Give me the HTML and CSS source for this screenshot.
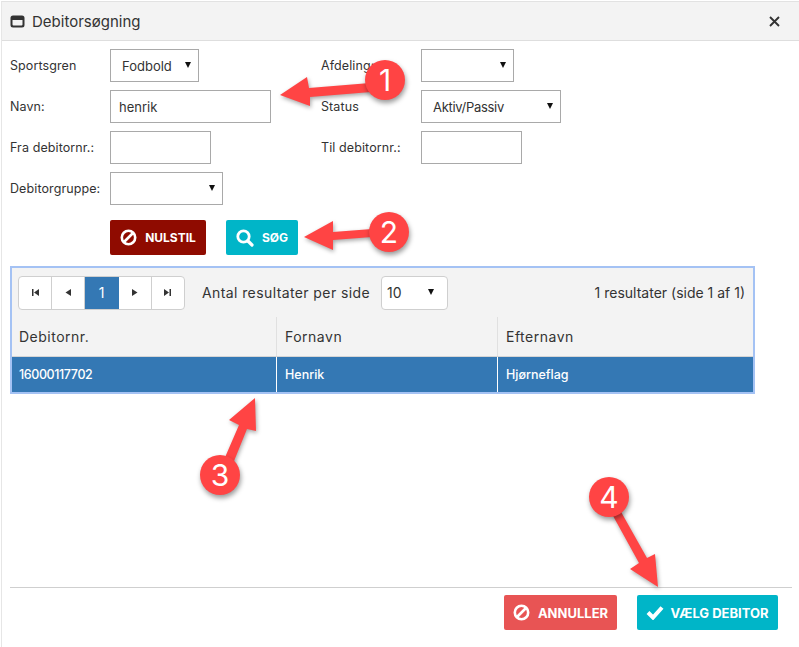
FILE: index.html
```html
<!DOCTYPE html>
<html lang="da">
<head>
<meta charset="utf-8">
<title>Debitorsøgning</title>
<link rel="stylesheet" href="styles.css">
</head>
<body>
<div class="window">
  <header class="titlebar">
    <svg class="win-icon" width="15" height="13" viewBox="0 0 15 13"><path fill="#333" fill-rule="evenodd" d="M3 .5h9A2.500 2.500 0 0 1 14.500 3v7a2.500 2.500 0 0 1-2.500 2.500H3A2.500 2.500 0 0 1 .5 10V3A2.500 2.500 0 0 1 3 .5zM2.500 5v4.500a1 1 0 0 0 1 1h8a1 1 0 0 0 1-1V5z"/></svg>
    <span class="title">Debitorsøgning</span>
    <svg class="close" width="11" height="11" viewBox="0 0 11 11"><path stroke="#333" stroke-width="1.900" d="M1 1l9 9M10 1l-9 9"/></svg>
  </header>
  <main class="content">
    <form class="filters">
      <label class="lbl">Sportsgren</label>
      <div class="select w89"><span class="sel-text">Fodbold</span></div>
      <label class="lbl">Afdeling:</label>
      <div class="select w93"></div>

      <label class="lbl">Navn:</label>
      <div class="input w161">henrik</div>
      <label class="lbl">Status</label>
      <div class="select w140"><span class="sel-text tight">Aktiv/Passiv</span></div>

      <label class="lbl">Fra debitornr.:</label>
      <div class="input w101"></div>
      <label class="lbl">Til debitornr.:</label>
      <div class="input w101"></div>

      <label class="lbl">Debitorgruppe:</label>
      <div class="select w113"></div>
    </form>
    <div class="actions">
      <button class="btn dark-red" type="button">
        <svg class="ico" width="17" height="17" viewBox="0 0 17 17"><circle cx="8.500" cy="8.500" r="6.700" fill="none" stroke="#fff" stroke-width="2.600"/><path stroke="#fff" stroke-width="2.600" d="M4 13L13 4"/></svg>
        NULSTIL
      </button>
      <button class="btn teal small" type="button">
        <svg class="ico" width="18" height="18" viewBox="0 0 18 18"><circle cx="7.500" cy="7.500" r="5.700" fill="none" stroke="#fff" stroke-width="2.800"/><path stroke="#fff" stroke-width="3.200" stroke-linecap="round" d="M12 12l4 4"/></svg>
        SØG
      </button>
    </div>
    <section class="grid">
      <div class="toolbar">
        <div class="pager">
          <span class="page"><svg width="9" height="9" viewBox="0 0 9 9"><path fill="#333" d="M1 1h1.500v7H1zM8 1v7L3 4.500z"/></svg></span>
          <span class="page"><svg width="9" height="9" viewBox="0 0 9 9"><path fill="#333" d="M7 1v7L1.500 4.500z"/></svg></span>
          <span class="page current">1</span>
          <span class="page"><svg width="9" height="9" viewBox="0 0 9 9"><path fill="#333" d="M2 1v7l5.500-3.500z"/></svg></span>
          <span class="page"><svg width="9" height="9" viewBox="0 0 9 9"><path fill="#333" d="M1 1v7l5-3.500zM6.500 1H8v7H6.500z"/></svg></span>
        </div>
        <span class="per-page">Antal resultater per side</span>
        <div class="select size"><span class="sel-text">10</span></div>
        <span class="count">1 resultater (side 1 af 1)</span>
      </div>
      <div class="row head">
        <div class="cell c1">Debitornr.</div>
        <div class="cell c2">Fornavn</div>
        <div class="cell c3">Efternavn</div>
      </div>
      <div class="row selected">
        <div class="cell c1 digits">16000117702</div>
        <div class="cell c2">Henrik</div>
        <div class="cell c3">Hjørneflag</div>
      </div>
    </section>
    <footer class="footer">
      <button class="btn soft-red big-text" type="button">
        <svg class="ico" width="17" height="17" viewBox="0 0 17 17"><circle cx="8.500" cy="8.500" r="6.700" fill="none" stroke="#fff" stroke-width="2.600"/><path stroke="#fff" stroke-width="2.600" d="M4 13L13 4"/></svg>
        ANNULLER
      </button>
      <button class="btn teal wide big-text" type="button">
        <svg class="ico" width="18" height="15" viewBox="0 0 18 15"><path fill="none" stroke="#fff" stroke-width="4" d="M2 7.500l5 5 9-10"/></svg>
        VÆLG DEBITOR
      </button>
    </footer>
  </main>
</div>

<svg class="arrows" width="799" height="647" viewBox="0 0 799 647">
  <g fill="#ff4444">
    <path d="M280 95L307 77L309 88L370 83L371 92L310 97L310 106z"/>
    <path d="M304 237L333 221L333 232L372 229L372 237L333 240L333 250z"/>
    <path d="M255 398L229 420L239 425L223 462L232 466L247 429L256 431z"/>
    <path d="M658 587L630 569L639 563L612 514L620 510L647 558L655 554z"/>
  </g>
</svg>
<span class="badge b1">1</span>
<span class="badge b2">2</span>
<span class="badge b3">3</span>
<span class="badge b4">4</span>
</body>
</html>
```
FILE: styles.css
```css
* { box-sizing: border-box; }
html, body { margin: 0; padding: 0; }
body {
  width: 799px;
  height: 647px;
  overflow: hidden;
  position: relative;
  background: #fff;
  color: #333;
  font-family: Inter, "Open Sans", sans-serif;
  font-size: 13px;
}
.window {
  height: 647px;
  margin-left: 1px;
  margin-top: 1px;
  border-top: 1px solid #e2e2e2;
  border-left: 1px solid #e6e6e6;
  display: flex;
  flex-direction: column;
}
.titlebar {
  height: 39px;
  flex: none;
  display: flex;
  align-items: center;
  padding: 0 19px 0 8px;
  background: #f3f3f3;
  border-bottom: 1px solid #dedede;
}
.win-icon { margin-right: 7px; }
.title { font-size: 15px; flex: 1; }
.close { margin-top: 1px; }
.content { flex: 1; padding: 8px 0 0 8px; display: flex; flex-direction: column; }
.filters {
  display: grid;
  grid-template-columns: 100px 211px 100px 1fr;
  grid-auto-rows: 33px;
  row-gap: 8px;
  align-items: center;
  justify-items: start;
}
.lbl { font-size: 12.500px; letter-spacing: .1px; }
.select, .input {
  height: 33px;
  border: 1px solid #a9a9a9;
  background: #fff;
  display: flex;
  align-items: center;
  position: relative;
  font-size: 13px;
}
.input { padding-left: 8px; }
.select::after {
  content: "";
  position: absolute;
  right: 7px;
  top: 12px;
  border-left: 3.500px solid transparent;
  border-right: 3.500px solid transparent;
  border-top: 6px solid #111;
}
.sel-text { padding-left: 11px; }
.tight { letter-spacing: -.3px; }
.w89 { width: 89px; }
.w93 { width: 93px; }
.w113 { width: 113px; }
.w140 { width: 140px; }
.w161 { width: 161px; }
.w101 { width: 101px; }
.actions { display: flex; gap: 20px; margin: 15px 0 0 100px; }
.btn {
  height: 35px;
  border: 0;
  border-radius: 2px;
  color: #fff;
  font-family: inherit;
  font-weight: 700;
  font-size: 12px;
  display: flex;
  align-items: center;
  justify-content: center;
  gap: 8px;
  padding: 0;
}
.big-text { font-size: 13px; }
.dark-red { background: #8f0b00; width: 96px; }
.teal { background: #00b5c8; }
.small { width: 72px; }
.soft-red { background: #e85454; width: 113px; }
.wide { width: 141px; gap: 6px; }
.grid {
  width: 745px;
  height: 128px;
  margin-top: 11px;
  border: 2px solid #a4c2f4;
  display: flex;
  flex-direction: column;
}
.toolbar {
  height: 49px;
  flex: none;
  background: #f3f3f3;
  display: flex;
  align-items: center;
  padding: 0 8px 0 6px;
}
.pager {
  display: flex;
  width: 167px;
  height: 34px;
  border: 1px solid #cfcfcf;
  border-radius: 4px;
  background: #fff;
  overflow: hidden;
}
.page {
  flex: 1;
  display: flex;
  align-items: center;
  justify-content: center;
  border-right: 1px solid #cfcfcf;
}
.page:last-child { border-right: 0; }
.current { background: #3478b4; color: #fff; border-right-color: #3478b4; font-size: 14px; }
.per-page { margin-left: 17px; font-size: 14px; letter-spacing: .4px; }
.size { width: 67px; height: 34px; margin-left: 11px; border: 1px solid #cfcfcf; border-radius: 4px; font-size: 14px; }
.size .sel-text { padding-left: 5px; }
.size::after { right: 13px; }
.count { margin-left: auto; font-size: 14px; }
.row { display: flex; flex: none; }
.head { height: 40px; background: #f3f3f3; font-size: 14px; letter-spacing: .5px; border-bottom: 1px solid #d5d5d5; }
.selected { height: 35px; background: #3478b4; color: #fff; font-weight: 500; font-size: 12.500px; }
.cell { display: flex; align-items: center; padding-left: 8px; border-right: 1px solid #e0e0e0; }
.selected .cell { border-right-color: #fff; }
.digits { letter-spacing: -.4px; }
.c1 { width: 265px; padding-left: 7px; }
.c2 { width: 221px; }
.c3 { flex: 1; border-right: 0; }
.footer {
  width: 782px;
  margin-top: 193px;
  padding-top: 7px;
  border-top: 1px solid #cfcfcf;
  display: flex;
  justify-content: flex-end;
  gap: 20px;
  padding-right: 14px;
}
.arrows {
  position: absolute;
  left: 0;
  top: 0;
  filter: drop-shadow(1px 2px 2px rgba(0,0,0,.35));
}
.badge {
  position: absolute;
  width: 40px;
  height: 40px;
  border-radius: 50%;
  background: #ff4444;
  color: #fff;
  font-size: 30px;
  display: flex;
  align-items: center;
  justify-content: center;
  box-shadow: 1px 3px 5px rgba(0,0,0,.4);
}
.b1 { left: 365px; top: 60px; }
.b2 { left: 369px; top: 212px; }
.b3 { left: 200px; top: 455px; }
.b4 { left: 589px; top: 477px; }
```
